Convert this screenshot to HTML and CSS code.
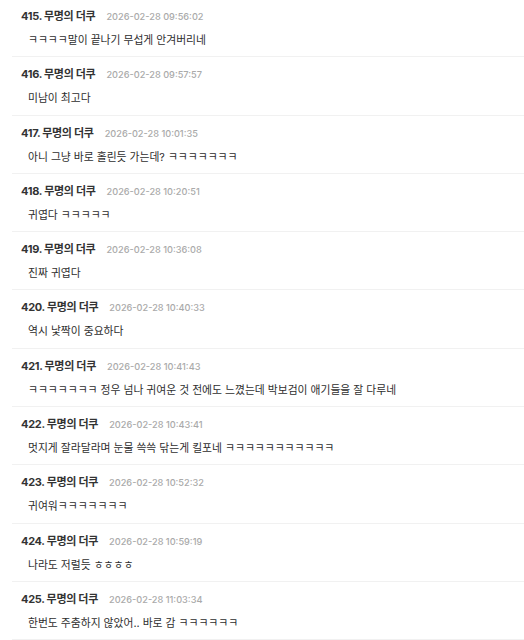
FILE: index.html
```html
<!DOCTYPE html>
<html lang="ko">
<head>
    <meta charset="UTF-8">
    <meta name="viewport" content="width=device-width, initial-scale=1.0">
    <title>댓글</title>
    <link rel="stylesheet" href="styles.css">
</head>
<body>
    <ul class="comments">
        <li class="comment">
            <div class="head"><strong>415. 무명의 더쿠</strong><span class="date">2026-02-28 09:56:02</span></div>
            <p>ㅋㅋㅋㅋ말이 끝나기 무섭게 안겨버리네</p>
        </li>
        <li class="comment">
            <div class="head"><strong>416. 무명의 더쿠</strong><span class="date">2026-02-28 09:57:57</span></div>
            <p>미남이 최고다</p>
        </li>
        <li class="comment">
            <div class="head"><strong>417. 무명의 더쿠</strong><span class="date">2026-02-28 10:01:35</span></div>
            <p>아니 그냥 바로 홀린듯 가는데? ㅋㅋㅋㅋㅋㅋㅋ</p>
        </li>
        <li class="comment">
            <div class="head"><strong>418. 무명의 더쿠</strong><span class="date">2026-02-28 10:20:51</span></div>
            <p>귀엽다 ㅋㅋㅋㅋㅋ</p>
        </li>
        <li class="comment">
            <div class="head"><strong>419. 무명의 더쿠</strong><span class="date">2026-02-28 10:36:08</span></div>
            <p>진짜 귀엽다</p>
        </li>
        <li class="comment">
            <div class="head"><strong>420. 무명의 더쿠</strong><span class="date">2026-02-28 10:40:33</span></div>
            <p>역시 낯짝이 중요하다</p>
        </li>
        <li class="comment">
            <div class="head"><strong>421. 무명의 더쿠</strong><span class="date">2026-02-28 10:41:43</span></div>
            <p>ㅋㅋㅋㅋㅋㅋㅋ 정우 넘나 귀여운 것 전에도 느꼈는데 박보검이 애기들을 잘 다루네</p>
        </li>
        <li class="comment">
            <div class="head"><strong>422. 무명의 더쿠</strong><span class="date">2026-02-28 10:43:41</span></div>
            <p>멋지게 잘라달라며 눈물 쓱쓱 닦는게 킬포네 ㅋㅋㅋㅋㅋㅋㅋㅋㅋㅋㅋ</p>
        </li>
        <li class="comment">
            <div class="head"><strong>423. 무명의 더쿠</strong><span class="date">2026-02-28 10:52:32</span></div>
            <p>귀여워ㅋㅋㅋㅋㅋㅋㅋ</p>
        </li>
        <li class="comment">
            <div class="head"><strong>424. 무명의 더쿠</strong><span class="date">2026-02-28 10:59:19</span></div>
            <p>나라도 저럴듯 ㅎㅎㅎㅎ</p>
        </li>
        <li class="comment">
            <div class="head"><strong>425. 무명의 더쿠</strong><span class="date">2026-02-28 11:03:34</span></div>
            <p>한번도 주춤하지 않았어.. 바로 감 ㅋㅋㅋㅋㅋㅋ</p>
        </li>
    </ul>
</body>
</html>
```

FILE: styles.css
```css
* {
    margin: 0;
    padding: 0;
    box-sizing: border-box;
}
li {
    list-style: none;
}
body {
    background: #fff;
    color: #333;
    font-family: Inter, "Noto Sans CJK KR", sans-serif;
}
.comments {
    padding-top: 8px;
    margin-left: 12px;
}
.comment {
    padding: 0 0 7.3px 9px;
    border-bottom: 1px solid #f1f1f1;
}
.comment + .comment {
    padding-top: 9px;
}
.head {
    display: flex;
    align-items: baseline;
    gap: 11px;
    height: 16px;
    line-height: 16px;
}
.head strong {
    font-size: 11px;
    font-weight: 700;
    letter-spacing: -0.3px;
    color: #333;
}
.head .date {
    font-size: 9.2px;
    font-weight: 500;
    color: #aaa;
}
.comment p {
    margin-top: 9px;
    padding-left: 7px;
    font-size: 10.8px;
    line-height: 16px;
    color: #2e2e2e;
}
```
